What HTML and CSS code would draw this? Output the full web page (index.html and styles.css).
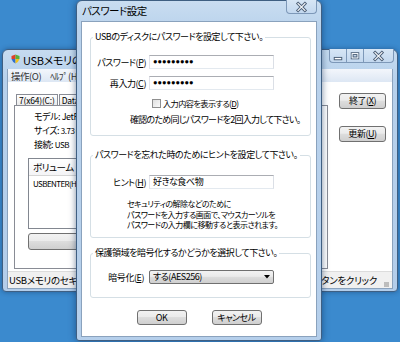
FILE: index.html
```html
<!DOCTYPE html>
<html lang="ja">
<head>
<meta charset="utf-8">
<title>パスワード設定</title>
<link rel="stylesheet" href="styles.css">
</head>
<body>
<div class="win back">
  <div class="titlebar">
    <svg class="app-icon" width="9" height="10" viewBox="0 0 9 10">
      <path d="M0.5 2 L4.5 0.5 L4.5 5 L0.5 5 Z" fill="#e0402a"/>
      <path d="M4.5 0.5 L8.5 2 L8.5 5 L4.5 5 Z" fill="#5ab03a"/>
      <path d="M0.5 5 L4.5 5 L4.5 9.5 Q1.5 8 0.5 5 Z" fill="#2f6fd0"/>
      <path d="M4.5 5 L8.5 5 Q7.5 8 4.5 9.5 Z" fill="#f2c21c"/>
    </svg>
    <span class="title">USBメモリのセキュリティ</span>
    <div class="caption-btns">
      <div class="cbtn cmin"><svg width="17" height="14" viewBox="0 0 17 14"><rect x="4.5" y="8.5" width="8" height="2.5" fill="#fff" stroke="#4a5d75"/></svg></div>
      <div class="cbtn cmax"><svg width="17" height="14" viewBox="0 0 17 14"><rect x="4.5" y="3.5" width="8" height="6.5" fill="none" stroke="#4a5d75" stroke-width="1"/><rect x="5.5" y="4.5" width="6" height="4.5" fill="none" stroke="#fff" stroke-width="1"/><rect x="6.5" y="5.5" width="4" height="2.5" fill="none" stroke="#4a5d75" stroke-width="1"/></svg></div>
      <div class="cbtn cclose"><svg width="30" height="14" viewBox="0 0 30 14"><path d="M11.5 3.5 L18.5 10.5 M18.5 3.5 L11.5 10.5" stroke="#4a5d75" stroke-width="3.2" stroke-linecap="square"/><path d="M11.5 3.5 L18.5 10.5 M18.5 3.5 L11.5 10.5" stroke="#f4f6f8" stroke-width="1.4" stroke-linecap="square"/></svg></div>
    </div>
  </div>
  <div class="client">
    <div class="menubar"><span class="menu">操作(O)</span><span class="menu">ﾍﾙﾌﾟ(H)</span></div>
    <div class="main">
      <div class="tabs-area">
        <div class="tabrow"><span class="tab">7(x64)(C:)</span><span class="tab">Data(D:)</span></div>
        <div class="tabpanel">
          <div class="info">モデル: JetFlash Transcend 4GB</div>
          <div class="info">サイズ: <span class="num">3.73 GB</span></div>
          <div class="info">接続: <span class="num">USB</span></div>
          <div class="listbox">
            <div class="lb-head">ボリューム</div>
            <div class="lb-item">USBENTER(H:)</div>
          </div>
          <div class="wide-btn">保護領域の作成</div>
        </div>
      </div>
      <div class="side-btns">
        <div class="btn side">終了(<u>X</u>)</div>
        <div class="btn side second">更新(<u>U</u>)</div>
      </div>
    </div>
    <div class="statusbar">
      <span>USBメモリのセキュリティを設定するには</span>
      <span class="status-right">設定ボタンをクリック</span>
      <span class="grip"></span>
    </div>
  </div>
</div>

<div class="dlg">
  <div class="dlg-titlebar">
    <span class="dlg-title">パスワード設定</span>
    <div class="cbtn cclose single"><svg width="30" height="14" viewBox="0 0 30 14"><path d="M11.5 3.5 L18.5 10.5 M18.5 3.5 L11.5 10.5" stroke="#4a5d75" stroke-width="3.2" stroke-linecap="square"/><path d="M11.5 3.5 L18.5 10.5 M18.5 3.5 L11.5 10.5" stroke="#f4f6f8" stroke-width="1.4" stroke-linecap="square"/></svg></div>
  </div>
  <div class="dlg-client">
    <div class="group g1">
      <div class="legend">USBのディスクにパスワードを設定して下さい。</div>
      <div class="field first">
        <span class="label">パスワード(<u>P</u>)</span>
        <div class="input pw">●●●●●●●●●</div>
      </div>
      <div class="field second">
        <span class="label">再入力(<u>C</u>)</span>
        <div class="input pw">●●●●●●●●●</div>
      </div>
      <div class="check"><span class="box"></span><span class="check-label">入力内容を表示する(<u>D</u>)</span></div>
      <div class="note">確認のため同じパスワードを2回入力して下さい。</div>
    </div>
    <div class="group g2">
      <div class="legend">パスワードを忘れた時のためにヒントを設定して下さい。</div>
      <div class="field hint">
        <span class="label">ヒント(<u>H</u>)</span>
        <div class="input">好きな食べ物</div>
      </div>
      <div class="hint-text">セキュリティの解除などのために<br>パスワードを入力する画面で、マウスカーソルを<br>パスワードの入力欄に移動すると表示されます。</div>
    </div>
    <div class="group g3">
      <div class="legend">保護領域を暗号化するかどうかを選択して下さい。</div>
      <div class="field combo-row">
        <span class="label">暗号化(<u>E</u>)</span>
        <div class="combo"><span>する(AES256)</span><svg width="6" height="4" viewBox="0 0 6 4"><path d="M0 0 H6 L3 3.5 Z" fill="#000"/></svg></div>
      </div>
    </div>
    <div class="dlg-buttons">
      <div class="btn dbtn">OK</div>
      <div class="btn dbtn">キャンセル</div>
    </div>
  </div>
</div>
</body>
</html>
```
FILE: styles.css
```css
* { box-sizing: border-box; }

body {
  margin: 0;
  width: 400px;
  height: 342px;
  overflow: hidden;
  position: relative;
  background: #3b8ace;
  font-family: "Noto Sans CJK JP", "Noto Sans", sans-serif;
  font-feature-settings: "palt";
  font-size: 9px;
  letter-spacing: -0.45px;
  color: #000;
}

u { text-decoration: underline; text-underline-offset: 1px; }

/* ---------- windows ---------- */
.win {
  position: absolute;
  display: flex;
  flex-direction: column;
  border: 1px solid #3f5f82;
  border-radius: 6px 6px 4px 4px;
  background: linear-gradient(#c6dbf0, #b7d1ec 30px, #b3cdea);
  box-shadow: 0 0 5px rgba(10, 40, 80, 0.45);
}

.back {
  left: 2px;
  top: 49px;
  width: 396px;
  height: 243px;
  padding: 0 4px 2px 4px;
}

.titlebar {
  height: 19px;
  flex: none;
  display: flex;
  align-items: center;
  padding-left: 4px;
}

.app-icon { flex: none; margin-right: 3px; margin-top: -1px; }

.title {
  font-size: 11px;
  letter-spacing: -0.3px;
  white-space: nowrap;
  flex: 1;
  overflow: hidden;
}

.caption-btns {
  display: flex;
  align-self: flex-start;
  margin-top: -1px;
  margin-right: -1px;
}

.cbtn {
  height: 14px;
  display: flex;
  align-items: center;
  justify-content: center;
  background: linear-gradient(#d7e6f5, #c3d8ef);
  border: 1px solid #7d98b8;
  border-top: none;
}
.cmin { width: 17px; border-radius: 0 0 0 4px; border-right: none; }
.cmax { width: 17px; border-right: none; }
.cclose { width: 31px; border-radius: 0 0 4px 0; }
.cclose.single { border-radius: 0 0 4px 4px; }

.client {
  flex: 1;
  display: flex;
  flex-direction: column;
  background: #fff;
  border: 1px solid #8aa2bd;
  border-top: none;
  overflow: hidden;
}

.menubar {
  height: 13px;
  flex: none;
  display: flex;
  align-items: center;
  gap: 9px;
  padding-left: 3px;
  background: linear-gradient(#f3f6fb, #dde7f4);
  color: #333;
  font-size: 9.5px;
}

.main {
  height: 189px;
  flex: none;
  display: flex;
  background: #fff;
}

.tabs-area {
  width: 320px;
  padding: 12px 0 0 6px;
  display: flex;
  flex-direction: column;
}

.tabrow {
  height: 11px;
  display: flex;
  padding-left: 2px;
}

.tab {
  height: 11px;
  padding: 0 2px;
  border: 1px solid #898c95;
  border-bottom: none;
  background: linear-gradient(#fff, #eaeaea);
  font-size: 8.5px;
  letter-spacing: -0.2px;
  line-height: 10px;
  white-space: nowrap;
}
.tab + .tab { margin-left: 1px; }

.tabpanel {
  width: 314px;
  height: 164px;
  border: 1px solid #898c95;
  padding: 4px 0 0 13px;
}

.info {
  height: 14px;
  line-height: 14px;
  padding-left: 6px;
  white-space: nowrap;
  font-size: 9px;
}
.num { font-size: 8px; }

.listbox {
  margin-top: 6px;
  width: 290px;
  height: 71px;
  border: 1px solid #828790;
}

.lb-head {
  height: 17px;
  line-height: 16px;
  padding-left: 4px;
  border-bottom: 1px solid #d5d5d5;
  background: linear-gradient(#fff, #f4f4f6);
  font-size: 9.5px;
}

.lb-item {
  padding-left: 4px;
  margin-top: 1px;
  font-size: 8px;
  letter-spacing: -0.6px;
  line-height: 13px;
}

.wide-btn {
  margin-top: 4px;
  width: 200px;
  height: 17px;
  border: 1px solid #707070;
  border-radius: 3px;
  background: linear-gradient(#f2f2f2, #ebebeb 45%, #dddddd 50%, #cfcfcf);
  text-align: center;
  line-height: 15px;
}

.side-btns {
  display: flex;
  flex-direction: column;
  padding: 11px 0 0 11px;
}

.btn {
  border: 1px solid #707070;
  border-radius: 3px;
  background: linear-gradient(#f2f2f2, #ebebeb 45%, #dddddd 50%, #cfcfcf);
  text-align: center;
  white-space: nowrap;
}

.side {
  width: 47px;
  height: 16px;
  line-height: 14px;
}
.side.second { margin-top: 17px; }

.statusbar {
  flex: 1;
  display: flex;
  align-items: center;
  padding: 0 3px 0 1px;
  background: #f0f0f0;
  border-top: 1px solid #dcdcdc;
  font-size: 9.5px;
  letter-spacing: -0.3px;
  white-space: nowrap;
}
.status-right { margin-left: auto; margin-right: 7px; }
.grip {
  width: 5px;
  height: 5px;
  align-self: flex-end;
  margin-bottom: 1px;
  background: radial-gradient(circle, #a0a0a0 0.6px, transparent 0.9px) 0 0 / 2px 2px;
}

/* ---------- dialog ---------- */
.dlg {
  position: absolute;
  left: 76px;
  top: 0;
  width: 246px;
  height: 341px;
  display: flex;
  flex-direction: column;
  border: 1px solid #3f5f82;
  border-radius: 6px 6px 3px 3px;
  background: linear-gradient(#c9ddf1, #b9d2ec 30px, #b5cfeb);
  padding: 0 4px 3px 4px;
  box-shadow: 0 0 7px rgba(10, 40, 80, 0.55);
}

.dlg-titlebar {
  height: 20px;
  flex: none;
  display: flex;
  align-items: flex-start;
}

.dlg-title {
  flex: 1;
  padding: 3px 0 0 1px;
  font-size: 10.5px;
  letter-spacing: -0.5px;
  line-height: 14px;
}

.dlg-titlebar .cbtn { margin-top: -1px; }

.dlg-client {
  flex: 1;
  background: #fff;
  border: 1px solid #8aa2bd;
  display: flex;
  flex-direction: column;
  padding-top: 15px;
}

.group {
  margin: 0 5px 0 8px;
  border: 1px solid #d5dfe5;
  border-radius: 3px;
}
.g1 { padding-bottom: 9px; }
.g2 { margin-top: 19px; padding-bottom: 6.5px; }
.g3 { margin-top: 15px; padding-bottom: 13px; }

.legend {
  display: table;
  margin: -7px 0 0 2px;
  padding: 0 2px;
  background: #fff;
  line-height: 12px;
  white-space: nowrap;
}

.field {
  display: flex;
  align-items: center;
  height: 14px;
}
.field.first { margin-top: 12px; }
.field.second { margin-top: 7px; }
.field.hint { margin-top: 14px; }
.field.combo-row { margin-top: 11px; }

.label {
  width: 55px;
  text-align: right;
  margin-right: 3px;
  white-space: nowrap;
  flex: none;
}
.combo-row .label { width: 53px; margin-right: 5px; }

.input {
  width: 125px;
  height: 14px;
  border: 1px solid #abadb3;
  border-left-color: #e2e3ea;
  border-right-color: #dbdfe6;
  border-bottom-color: #e3e9ef;
  padding-left: 3px;
  line-height: 12px;
  white-space: nowrap;
  overflow: hidden;
}
.input.pw {
  font-family: "Liberation Mono", "DejaVu Sans Mono", monospace;
  font-feature-settings: normal;
  font-size: 7.5px;
  letter-spacing: 0;
  line-height: 12px;
  padding-left: 3px;
}

.check {
  margin: 7px 0 0 61px;
  height: 12px;
  display: flex;
  align-items: center;
  white-space: nowrap;
}
.check-label { font-size: 8.2px; letter-spacing: -0.6px; }
.box {
  width: 9px;
  height: 9px;
  margin-right: 2px;
  border: 1px solid #8f8f8f;
  background: linear-gradient(135deg, #e0e0e0, #fafafa);
  flex: none;
}

.note {
  margin: 5px 0 0 39px;
  line-height: 12px;
  letter-spacing: -0.75px;
  white-space: nowrap;
}

.hint-text {
  margin: 10px 0 0 36px;
  font-size: 8px;
  letter-spacing: -0.5px;
  line-height: 10.5px;
  white-space: nowrap;
}

.combo {
  width: 125px;
  height: 14px;
  border: 1px solid #707070;
  border-radius: 2px;
  background: linear-gradient(#f2f2f2, #ebebeb 45%, #dddddd 50%, #cfcfcf);
  display: flex;
  align-items: center;
  justify-content: space-between;
  padding: 0 3px 0 3px;
  line-height: 12px;
  white-space: nowrap;
}

.dlg-buttons {
  margin-top: 12px;
  display: flex;
  justify-content: center;
  gap: 25px;
}

.dbtn {
  width: 50px;
  height: 15px;
  line-height: 13px;
  font-size: 9px;
}
```
